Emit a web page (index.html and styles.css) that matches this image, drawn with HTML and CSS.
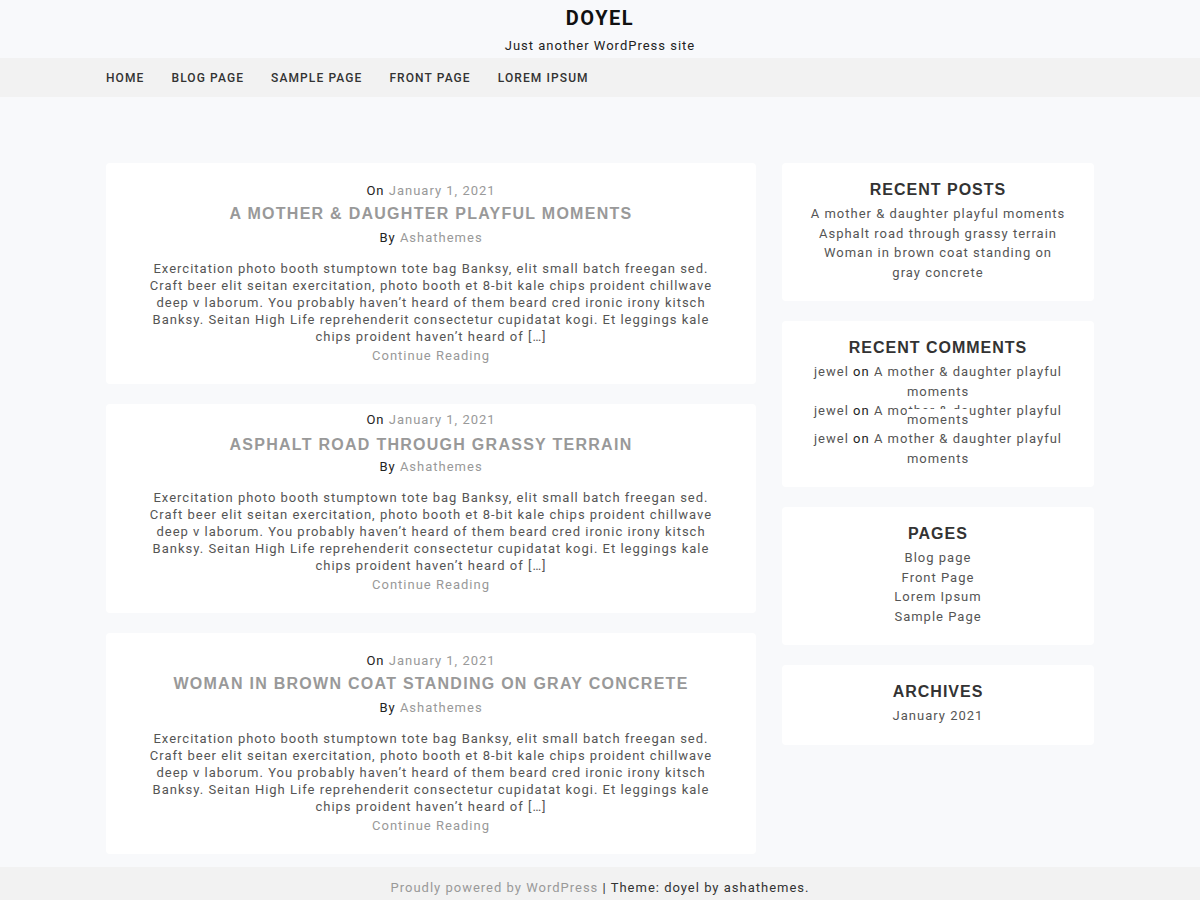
FILE: index.html
```html
<!DOCTYPE html>
<html lang="en">
<head>
<meta charset="utf-8">
<title>Doyel – Just another WordPress site</title>
<link rel="stylesheet" href="styles.css">
</head>
<body>
<header class="site-header">
  <div class="branding">
    <h1 class="site-title">DOYEL</h1>
    <p class="site-desc">Just another WordPress site</p>
  </div>
  <nav class="main-nav">
    <ul class="nav-list">
      <li><a href="#">Home</a></li>
      <li><a href="#">Blog page</a></li>
      <li><a href="#">Sample Page</a></li>
      <li><a href="#">Front Page</a></li>
      <li><a href="#">Lorem Ipsum</a></li>
    </ul>
  </nav>
</header>

<div class="content">
  <main class="posts">
    <article class="post">
      <div class="meta">On <a href="#">January 1, 2021</a></div>
      <h2 class="post-title"><a href="#">A mother &amp; daughter playful moments</a></h2>
      <div class="meta">By <a href="#">Ashathemes</a></div>
      <p class="excerpt">Exercitation photo booth stumptown tote bag Banksy, elit small batch freegan sed. Craft beer elit seitan exercitation, photo booth et 8-bit kale chips proident chillwave deep v laborum. You probably haven’t heard of them beard cred ironic irony kitsch Banksy. Seitan High Life reprehenderit consectetur cupidatat kogi. Et leggings kale chips proident haven’t heard of […]</p>
      <a class="more" href="#">Continue Reading</a>
    </article>
    <article class="post post-tight">
      <div class="meta">On <a href="#">January 1, 2021</a></div>
      <h2 class="post-title"><a href="#">Asphalt road through grassy terrain</a></h2>
      <div class="meta">By <a href="#">Ashathemes</a></div>
      <p class="excerpt">Exercitation photo booth stumptown tote bag Banksy, elit small batch freegan sed. Craft beer elit seitan exercitation, photo booth et 8-bit kale chips proident chillwave deep v laborum. You probably haven’t heard of them beard cred ironic irony kitsch Banksy. Seitan High Life reprehenderit consectetur cupidatat kogi. Et leggings kale chips proident haven’t heard of […]</p>
      <a class="more" href="#">Continue Reading</a>
    </article>
    <article class="post">
      <div class="meta">On <a href="#">January 1, 2021</a></div>
      <h2 class="post-title"><a href="#">Woman in brown coat standing on gray concrete</a></h2>
      <div class="meta">By <a href="#">Ashathemes</a></div>
      <p class="excerpt">Exercitation photo booth stumptown tote bag Banksy, elit small batch freegan sed. Craft beer elit seitan exercitation, photo booth et 8-bit kale chips proident chillwave deep v laborum. You probably haven’t heard of them beard cred ironic irony kitsch Banksy. Seitan High Life reprehenderit consectetur cupidatat kogi. Et leggings kale chips proident haven’t heard of […]</p>
      <a class="more" href="#">Continue Reading</a>
    </article>
  </main>

  <aside class="sidebar">
    <section class="widget">
      <h3 class="widget-title">Recent Posts</h3>
      <ul class="widget-list">
        <li><a href="#">A mother &amp; daughter playful moments</a></li>
        <li><a href="#">Asphalt road through grassy terrain</a></li>
        <li><a href="#">Woman in brown coat standing on gray concrete</a></li>
      </ul>
    </section>
    <section class="widget">
      <h3 class="widget-title">Recent Comments</h3>
      <ul class="widget-list comments">
        <li><a href="#">jewel</a> <span class="on">on</span> <a href="#">A mother &amp; daughter playful moments</a></li>
        <li class="squashed"><a href="#">jewel</a> <span class="on">on</span> <a href="#">A mother &amp; daughter playful <span class="cover">moments</span></a></li>
        <li><a href="#">jewel</a> <span class="on">on</span> <a href="#">A mother &amp; daughter playful moments</a></li>
      </ul>
    </section>
    <section class="widget">
      <h3 class="widget-title">Pages</h3>
      <ul class="widget-list">
        <li><a href="#">Blog page</a></li>
        <li><a href="#">Front Page</a></li>
        <li><a href="#">Lorem Ipsum</a></li>
        <li><a href="#">Sample Page</a></li>
      </ul>
    </section>
    <section class="widget">
      <h3 class="widget-title">Archives</h3>
      <ul class="widget-list">
        <li><a href="#">January 2021</a></li>
      </ul>
    </section>
  </aside>
</div>

<footer class="site-footer">
  <a href="#" class="wp">Proudly powered by WordPress</a> | Theme: doyel by ashathemes.
</footer>
</body>
</html>
```

FILE: styles.css
```css
* { box-sizing: border-box; }

html, body {
  margin: 0;
  padding: 0;
}

body {
  background: #f8f9fb;
  font-family: Roboto, "Liberation Sans", Arial, sans-serif;
  color: #333;
  font-size: 13px;
  letter-spacing: 1px;
}

a { text-decoration: none; color: #8f8f8f; }

.site-header {
  text-align: center;
}

.branding {
  padding-top: 7px;
  height: 58px;
}

.site-title {
  margin: 0;
  font-family: Roboto, "Liberation Sans", sans-serif;
  font-size: 20px;
  font-weight: 700;
  letter-spacing: 1.5px;
  line-height: 22px;
  color: #111;
}

.site-desc {
  margin: 9px 0 0;
  font-size: 13px;
  line-height: 16px;
  letter-spacing: 1px;
  color: #222;
}

.main-nav {
  background: #f2f2f2;
  height: 39px;
}

.nav-list {
  list-style: none;
  margin: 0 auto;
  padding: 0;
  width: 988px;
  display: flex;
  gap: 27px;
  height: 39px;
  align-items: center;
}

.nav-list a {
  color: #333;
  text-transform: uppercase;
  font-size: 12px;
  font-weight: 500;
  letter-spacing: 1.1px;
}

.content {
  width: 988px;
  margin: 66px auto 0;
  display: flex;
  gap: 26px;
  align-items: flex-start;
}

.posts {
  width: 650px;
  display: flex;
  flex-direction: column;
  gap: 20px;
}

.post {
  background: #fff;
  border-radius: 4px;
  padding: 20px 40px 20px;
  text-align: center;
}

.post-tight {
  padding-top: 8px;
}

.post-tight .post-title {
  margin-top: 8px;
  margin-bottom: 5px;
}

.meta {
  font-size: 13px;
  line-height: 16px;
  color: #222;
  letter-spacing: 1px;
}

.meta a { color: #999; }

.post-title {
  margin: 6px 0 7px;
  font-family: "Liberation Sans", Arial, sans-serif;
  font-size: 16px;
  line-height: 18px;
  font-weight: 700;
  letter-spacing: 1.27px;
  text-transform: uppercase;
}

.post-title a { color: #999; }

.excerpt {
  margin: 13.5px 0 0;
  font-size: 13px;
  line-height: 17px;
  letter-spacing: 1px;
  color: #555;
}

.more {
  display: inline-block;
  margin-top: 3.5px;
  font-size: 13px;
  line-height: 16px;
  letter-spacing: 1px;
  color: #999;
}

.sidebar {
  width: 312px;
  display: flex;
  flex-direction: column;
  gap: 20px;
}

.widget {
  background: #fff;
  border-radius: 4px;
  padding: 18px 27px 19px;
  text-align: center;
}

.widget-title {
  margin: 0 0 5px;
  font-family: "Liberation Sans", Arial, sans-serif;
  font-size: 16px;
  line-height: 18px;
  font-weight: 700;
  letter-spacing: 1px;
  text-transform: uppercase;
  color: #333;
}

.widget-list {
  list-style: none;
  margin: 0;
  padding: 0;
  font-size: 13px;
  line-height: 19.5px;
  letter-spacing: 1px;
}

.widget-list a { color: #555; }

.comments .on { color: #222; }

.comments .squashed {
  line-height: 9px;
  margin-top: 5px;
  margin-bottom: 5px;
}

.cover {
  background: #fff;
  padding-top: 3px;
}

.site-footer {
  margin-top: 13px;
  background: #f2f2f2;
  height: 40px;
  padding-top: 13px;
  text-align: center;
  font-size: 13px;
  letter-spacing: 1px;
  color: #333;
}

.site-footer .wp { color: #999; }
```
